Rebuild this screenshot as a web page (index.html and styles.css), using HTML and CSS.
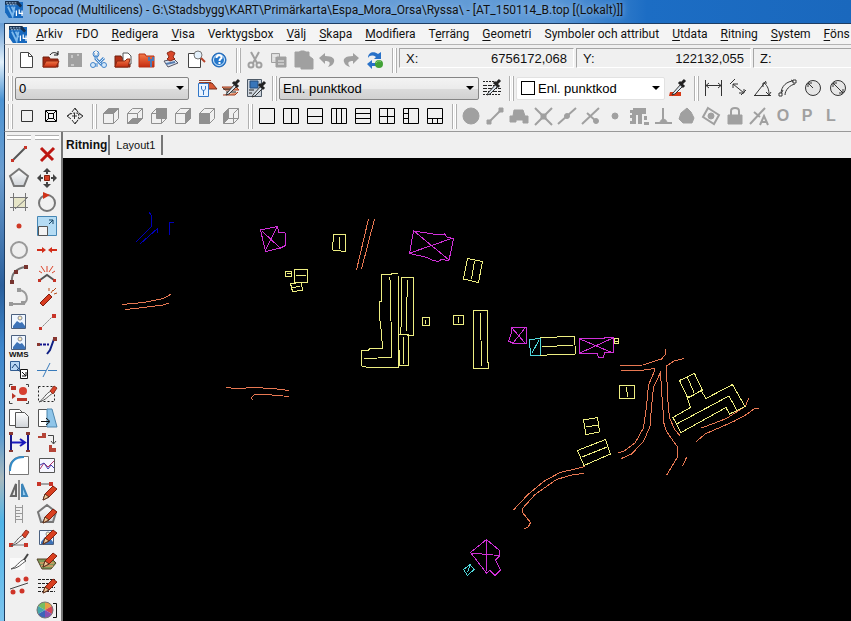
FILE: index.html
```html
<!DOCTYPE html>
<html lang="sv">
<head>
<meta charset="utf-8">
<title>Topocad</title>
<link rel="stylesheet" href="styles.css">
</head>
<body>
<svg class="defs" aria-hidden="true">
  <defs>
    <linearGradient id="steel" x2="0" y2="1"><stop stop-color="#fff"/><stop offset="1" stop-color="#cfd3d8"/></linearGradient>
    <linearGradient id="ember" x2="0" y2="1"><stop stop-color="#f47a48"/><stop offset="1" stop-color="#c52c10"/></linearGradient>
    <symbol id="logo" viewBox="0 0 20 18"><path d="M0 1h19v17H4L0 12z" fill="#1768bd"/><path d="M0 0h14l4 5-2 2-3-3H0z" fill="#17304f"/><path d="M1 2h11M2 4h10" stroke="#b9d7f4" stroke-dasharray="2 1"/><path d="M3 6l5 10 2-10M7 6l3 6" stroke="#7db9ed" stroke-width="2"/><path d="M12 10v6M15 9v4h4M18 10v6" stroke="#fff" stroke-width="1.3"/></symbol>
    <symbol id="pencil" viewBox="0 0 24 24"><path d="M8 19l2-6 8-8 4 3-8 8z" fill="#d94020" stroke="#85200d"/><path d="M8 19l2-6 4 3z" fill="#f4c998" stroke="#553322"/></symbol>
    <symbol id="dropper" viewBox="0 0 24 24"><path d="M8 17l8-9 2 2-8 8-3 1z" fill="#dbe5ee" stroke="#333"/><path d="M14 6l5 5M16 8l4-4" stroke="#222" stroke-width="3"/></symbol>
    <symbol id="knife" viewBox="0 0 24 24"><path d="M4 20c5-3 6-8 12-11l2 2c-5 3-7 7-14 9z" fill="#f8f8f8" stroke="#555"/><path d="M15 9l4-5 3 2-4 6z" fill="#d9442a" stroke="#913020"/></symbol>
    <symbol id="image" viewBox="0 0 24 24"><path d="M4.500 4.500h14v14h-14z" fill="#eef6ff" stroke="#4b607f"/><path d="M6 16l4-5 3 2 2-1 3 4v2H6z" fill="#3d73b8"/><circle cx="13" cy="8" r="2" fill="#fff3bd" stroke="#889"/></symbol>
  </defs>
</svg>
<div class="window">
  <header class="titlebar"><svg class="logo"><use href="#logo"/></svg><h1>Topocad (Multilicens) - G:\Stadsbygg\KART\Primärkarta\Espa_Mora_Orsa\Ryssa\ - [AT_150114_B.top [(Lokalt)]]</h1></header>
  <nav class="menu" aria-label="Meny">
    <svg class="logo"><use href="#logo"/></svg>
    <button><u>A</u>rkiv</button><button>FDO</button><button><u>R</u>edigera</button><button><u>V</u>isa</button><button>Verktygs<u>b</u>ox</button><button><u>V</u>älj</button><button><u>S</u>kapa</button><button><u>M</u>odifiera</button><button>T<u>e</u>rräng</button><button><u>G</u>eometri</button><button>Symboler och attribut</button><button><u>U</u>tdata</button><button><u>R</u>itning</button><button><u>S</u>ystem</button><button><u>F</u>öns</button>
  </nav>
  <div class="toolbars">
    <div class="row">
      <div class="bar">
        <button aria-label="Ny"><svg><path d="M5.500 4.500h8l4 4v11h-12z" fill="#fff" stroke="#444"/><path d="M13.500 4.500v4h4" stroke="#444"/></svg></button>
        <button aria-label="Öppna"><svg><path d="M4 9h6l1 2h8v8H4z" fill="#a92a12" stroke="#70200e"/><path d="M4 19l3-6h13l-3 6z" fill="url(#ember)" stroke="#8d2711"/><path d="M11 7c2-3 5-3 8-1M19 3v4h-4" stroke="#111"/></svg></button>
        <button class="off" aria-label="Spara"><svg class="fill"><path d="M5 5h14v14H5z" class="solid"/><path d="M9 7v3M15 6v2M8 17h3" stroke="#eee"/></svg></button>
        <button aria-label="Inställningar"><svg><path d="M9 5v6l6 6M6 17h5M17 10l-4 4" stroke="#4385cb" stroke-width="3"/><path d="M9 5v6l6 6M6 17h5M17 10l-4 4" stroke="#d5e9fa"/><circle cx="9" cy="6" r="3" stroke="#4385cb"/><circle cx="6" cy="17" r="2.500" fill="#d5e9fa" stroke="#4385cb"/><circle cx="17" cy="17" r="2.500" fill="#d5e9fa" stroke="#4385cb"/><path d="M9 3v4" stroke="#f0f0f0" stroke-width="2"/></svg></button>
        <button aria-label="Öppna ritning"><svg><path d="M4 8h6l1 2h8v9H4z" fill="#b33016" stroke="#70200e"/><path d="M12 5h5l3 3v8h-8z" fill="#fff" stroke="#555"/><path d="M4 19l2-6h8l2-2h3l-2 8z" fill="url(#ember)" stroke="#8d2711"/></svg></button>
        <button aria-label="Projekt"><svg><path d="M4 6h6l1 2h8v11H4z" fill="url(#ember)" stroke="#b62e12"/><path d="M16 11v8M14 9v3h4V9" stroke="#4c78b5" stroke-width="2"/></svg></button>
        <button aria-label="Stämpel"><svg><path d="M5 13l10-2 4 4-10 4z" fill="#dce5f1" stroke="#556"/><path d="M7 16l9-2" stroke="#567bad" stroke-width="2"/><path d="M8 11l2-2-2-4 4-2 4 2-2 4 2 2-5 2z" fill="#d9472a" stroke="#8a2a16"/></svg></button>
        <button aria-label="Förhandsgranska"><svg><path d="M5.500 5.500h8l4 4v10h-12z" fill="#fff" stroke="#444"/><circle cx="15" cy="7" r="4" fill="#e4f1fc" stroke="#777"/><path d="M18 10l4 4" stroke="#b8432a" stroke-width="2"/></svg></button>
        <button aria-label="Hjälp"><svg><circle cx="12" cy="12" r="7" fill="#2678cb" stroke="#1b64b5"/><circle cx="12" cy="12" r="5.500" stroke="#d9edff"/><path d="M9.500 10c0-4 6-3 5 0-1 1-2 1-2 3M12.500 14v2" stroke="#fff" stroke-width="2"/></svg></button>
      </div>
      <div class="bar off">
        <button aria-label="Klipp ut"><svg><path d="M8 4l6 11M16 4l-6 11" stroke-width="2"/><circle cx="8" cy="17" r="2.500" stroke-width="2"/><circle cx="16" cy="17" r="2.500" stroke-width="2"/></svg></button>
        <button aria-label="Kopiera"><svg><path d="M4.500 5.500h8v9h-8z" fill="#ddd"/><path d="M9 9h10v10H9z" class="solid"/><path d="M6 8h4M6 11h2M11 13h6M11 16h6" stroke="#eee"/></svg></button>
        <button aria-label="Klistra in"><svg><path d="M4 4h4l2-1h3l2 1h3v4l4 3v10H10v-2H4z" class="solid"/></svg></button>
        <button aria-label="Ångra"><svg class="fill"><path d="M4 10l6-5v3c8 0 10 3 9 6-1 3-3 4-6 5 3-4 2-6-3-6v3z" class="solid"/></svg></button>
        <button aria-label="Gör om"><svg class="fill"><path d="M20 10l-6-5v3c-8 0-10 3-9 6 1 3 3 4 6 5-3-4-2-6 3-6v3z" class="solid"/></svg></button>
        <button aria-label="Uppdatera"><svg class="fill"><path d="M5 10c0-6 6-7 10-4l3-2v7h-7l2-2c-3-2-6-2-8 1z" fill="#2871c8"/><path d="M4 16l5-4v3h5v3H9v3z" fill="#2871c8"/><circle cx="16" cy="16" r="4" fill="#42a237"/><path d="M13 15c2-3 4-2 5-1" stroke="#8bd078"/></svg></button>
      </div>
      <div class="bar grow">
        <dl class="coords"><div><dt>X:</dt><dd>6756172,068</dd></div><div><dt>Y:</dt><dd>122132,055</dd></div><div><dt>Z:</dt><dd></dd></div></dl>
      </div>
    </div>
    <div class="row">
      <div class="bar">
        <span class="combo layer"><select aria-label="Lager"><option>0</option></select></span>
        <button aria-label="Lagerhanterare"><svg><path d="M4 4.500h12M4 6.500h12" stroke="#9a4329"/><path d="M10 7h7l5 6H12z" fill="#d95732" stroke="#7a2e18"/><path d="M3.500 7.500h10v13h-10z" fill="#e9f3ff" stroke="#3277c8"/><path d="M6.500 10v3l2 2 2-2v-3M8.500 14v5" stroke="#3277c8"/></svg></button>
        <button aria-label="Välj lager"><svg><path d="M3 11h14l3 3H6zM4 19h12l3-3" fill="#e89975" stroke="#9f3a1e"/><path d="M4 13h8M7 16h10" stroke="#222"/><use href="#dropper"/></svg></button>
        <button aria-label="Hämta egenskaper"><svg><path d="M4.500 3.500h14v17h-14z" fill="#ccd3db" stroke="#4d5966"/><path d="M7 5h8v7H7z" fill="#3976ba" stroke="#234b7b"/><path d="M6 14h5M6 17h3" stroke="#222"/><use href="#dropper" x="2" y="2"/></svg></button>
      </div>
      <div class="bar">
        <span class="combo code"><select aria-label="Punktkod"><option>Enl. punktkod</option></select></span>
        <button aria-label="Hämta linjetyp"><svg><path d="M3 5.500h12M3 18.500h18" stroke="#222" stroke-dasharray="2 1"/><path d="M3 9.500h12M3 12.500h18M3 15.500h18" stroke="#222" stroke-dasharray="4 1"/><use href="#dropper"/></svg></button>
      </div>
      <div class="bar">
        <span class="combo color"><i></i><select aria-label="Färg"><option>Enl. punktkod</option></select></span>
        <button aria-label="Hämta färg"><svg><path d="M5 16h11v4H4z" fill="#d63a18"/><use href="#dropper"/></svg></button>
      </div>
      <div class="bar wide dark">
        <button aria-label="Horisontellt mått"><svg><path d="M4.500 4v16M20.500 4v16M5 9.500h15M8 7l-3 2.500 3 2.500M17 7l3 2.500-3 2.500"/></svg></button>
        <button aria-label="Parallellt mått"><svg><path d="M7 8l11 9M7 12V8h5M18 13v4h-5M4 8l5-5M15 19l5-5"/></svg></button>
        <button aria-label="Vinkelmått"><svg><path d="M3 19.500h17M4 19L15 5M13 7c4 3 5 7 5 12M12 11V7h4M15 16l3 3 2-3"/></svg></button>
        <button aria-label="Bågmått"><svg><path d="M5 18C5 10 11 5 18 5M9 19c0-5 5-10 10-11M7 14l-2 4M15 4l4 2"/><path d="M3 17h3v3H3zM17 4h3v3h-3z" fill="#fff"/></svg></button>
        <button aria-label="Radiemått"><svg><circle cx="12" cy="12" r="7.500" fill="#e6e6e6"/><path d="M12 12L7 7M7 11V7h4"/></svg></button>
        <button aria-label="Diametermått"><svg><circle cx="12" cy="12" r="7.500" fill="#e6e6e6"/><path d="M7 7l10 10M7 11V7h4M13 17h4v-4"/></svg></button>
      </div>
    </div>
    <div class="row">
      <div class="bar dark">
        <button aria-label="Ram"><svg><path d="M6.500 6.500h11v11h-11z"/></svg></button>
        <button aria-label="Vy uppifrån"><svg><path d="M6.500 6.500h11v11h-11zM9.500 9.500h5v5h-5zM7 7l3 3M17 7l-3 3M7 17l3-3M17 17l-3-3" stroke="#000"/></svg></button>
        <button aria-label="Rotera vy"><svg><path d="M9 8l3-4 3 4M8 9l-4 3 4 3M16 9l4 3-4 3M9 16l3 4 3-4M11.500 9v6M9 12h5"/><path d="M12 5c5 3 5 11 0 14M5 12c3-4 11-4 14 0" stroke-dasharray="2 1"/></svg></button>
      </div>
      <div class="bar cube">
        <button aria-label="Topp"><svg><path d="M4.500 9.500l5-5h10l-5 5z" class="solid"/><path d="M4.500 9.500h10v10h-10zM19.500 4.500v10l-5 5M14.500 9.500l5-5"/></svg></button>
        <button aria-label="Botten"><svg><path d="M4.500 19.500l5-5h10l-5 5z" class="solid"/><path d="M4.500 9.500h10v10h-10zl5-5h10v10l-5 5M14.500 9.500l5-5"/></svg></button>
        <button aria-label="Bak"><svg><path d="M9.500 4.500h10v10h-10z" class="solid"/><path d="M4.500 9.500h10v10h-10zl5-5h10v10l-5 5M14.500 9.500l5-5"/></svg></button>
        <button aria-label="Höger"><svg><path d="M14.500 9.500l5-5v10l-5 5z" class="solid"/><path d="M4.500 9.500h10v10h-10zl5-5h10v10l-5 5M14.500 9.500l5-5"/></svg></button>
        <button aria-label="Fram"><svg><path d="M4.500 9.500h10v10h-10z" class="solid"/><path d="M4.500 9.500h10v10h-10zl5-5h10v10l-5 5M14.500 9.500l5-5"/></svg></button>
        <button aria-label="Vänster"><svg><path d="M4.500 9.500l5-5v10l-5 5z" class="solid"/><path d="M9.500 4.500h10v10h-10M4.500 19.500h10v-10M14.500 19.500l5-5M14.500 9.500l5-5"/></svg></button>
      </div>
      <div class="bar black">
        <button aria-label="Ett fönster"><svg><path d="M4.500 4.500h15v15h-15z"/></svg></button>
        <button aria-label="Två kolumner"><svg><path d="M4.500 4.500h15v15h-15zM12.500 4v15"/></svg></button>
        <button aria-label="Två rader"><svg><path d="M4.500 4.500h15v15h-15zM4 12.500h15"/></svg></button>
        <button aria-label="Tre kolumner"><svg><path d="M4.500 4.500h15v15h-15zM9.500 4v15M14.500 4v15"/></svg></button>
        <button aria-label="Tre rader"><svg><path d="M4.500 4.500h15v15h-15zM4 9.500h15M4 14.500h15"/></svg></button>
        <button aria-label="Fyra fönster"><svg><path d="M4.500 4.500h15v15h-15zM4 12.500h15M12.500 4v15"/></svg></button>
        <button aria-label="Tre till vänster"><svg><path d="M4.500 4.500h15v15h-15zM9.500 4v15M4 9.500h5M4 14.500h5"/></svg></button>
        <button aria-label="Tre nedtill"><svg><path d="M4.500 4.500h15v15h-15zM4 14.500h15M9.500 14v5M14.500 14v5"/></svg></button>
      </div>
      <div class="bar off snap">
        <button aria-label="Snappa"><svg><circle cx="12" cy="12" r="8" class="solid"/></svg></button>
        <button aria-label="Slutpunkt"><svg><path d="M5 19L18 6" stroke-width="2"/><path d="M4 16h4v4H4zM16 4h4v4h-4z" class="solid"/></svg></button>
        <button aria-label="Närmast"><svg><path d="M7 6h9l2 6h3v7h-5v-3H9v2H3v-6h3z" class="solid"/></svg></button>
        <button aria-label="Skärning"><svg><path d="M4 4l17 17M21 4L4 21" stroke-width="2"/><path d="M10 10h5v5h-5z" class="solid"/></svg></button>
        <button aria-label="Mittpunkt"><svg><path d="M3 20L21 4" stroke-width="2"/><circle cx="12" cy="12" r="2.500" class="solid"/></svg></button>
        <button aria-label="Tangent"><svg><path d="M3 20L20 4M8 9l10 9" stroke-width="2"/><circle cx="17" cy="17" r="2.500" class="solid"/></svg></button>
        <button aria-label="Punkt"><svg><circle cx="12" cy="12" r="3" class="solid"/></svg></button>
        <button aria-label="Objekt"><svg class="fill"><path d="M3 6h3V4h13v6h-4v10h-4v-9H9v9H3v-3h2v-3H3v-3h2V9H3z" class="solid"/><path d="M17 12h3v4h-3zM17 18h5v3h-5z" class="solid"/></svg></button>
        <button aria-label="Vinkelrätt"><svg><path d="M12 4v14M4 19h17" stroke-width="2"/><path d="M9 19c0-5 7-5 7 0z" class="solid"/></svg></button>
        <button aria-label="Kvadrant"><svg><path d="M12 4l4 4 3 6-2 5H8l-4-4 2-6z" class="solid"/></svg></button>
        <button aria-label="Centrum"><svg><path d="M9 4l11 7-5 9-11-7z" stroke-width="2"/><circle cx="12" cy="12" r="3" class="solid"/></svg></button>
        <button aria-label="Lås"><svg><path d="M5 11h14v9H5z" class="solid"/><path d="M8 11V7c0-4 8-4 8 0v4" stroke-width="2"/></svg></button>
        <button aria-label="Automatisk"><svg><path d="M3 20L18 4M7 8l6 5M13 21l4-9 4 9M14 18h6" stroke-width="2"/></svg></button>
        <button>O</button><button>P</button><button>L</button>
      </div>
    </div>
  </div>
  <main>
    <aside class="palette" aria-label="Ritverktyg">
      <div class="grip"></div><div class="grip"></div>
      <button aria-label="Linje"><svg><path d="M6 18L18 6" stroke="#555" stroke-width="2"/><path d="M4 17h3v3H4zM17 4h3v3h-3z" fill="#c83428"/></svg></button>
      <button aria-label="Radera"><svg><path d="M6 6l12 12M19 6L6 19" stroke="#bd1712" stroke-width="3"/></svg></button>
      <button aria-label="Polygon"><svg><path d="M12 3l9 7-4 10H7L3 10z" fill="url(#steel)" stroke="#777" stroke-width="2"/></svg></button>
      <button aria-label="Flytta"><svg><path d="M12 4v16M4 12h16" stroke="#444" stroke-width="2"/><path d="M12 2l4 4H8zM12 22l4-4H8zM2 12l4-4v8zM22 12l-4-4v8z" fill="#444"/><path d="M8 8h8v8H8z" fill="#f0f0f0"/><path d="M9.500 9.500h5v5h-5z" fill="#d54027" stroke="#85200d"/></svg></button>
      <button aria-label="Beskär"><svg><path d="M6 7h12v11H6z" fill="#e6e5c7"/><path d="M3 7.500h18M3 17.500h18M6.500 3v18M18.500 3v18M8 19L20 8" stroke="#777"/></svg></button>
      <button aria-label="Rotera"><svg><circle cx="12" cy="13" r="8" stroke="#777" stroke-width="2"/><path d="M8 2l7 3-7 4z" fill="#cf3219"/></svg></button>
      <button aria-label="Punkt"><svg><circle cx="12" cy="12" r="2.500" fill="#cf3926"/></svg></button>
      <button aria-label="Skala"><svg><path d="M2.500 2.500h19v19h-19z" fill="#b5dcf4" stroke="#4586b4"/><path d="M3.500 12.500h9v9h-9z" fill="#f3f3f3" stroke="#555"/><path d="M14 10l4-4M14 6h4v4" stroke="#174565"/></svg></button>
      <button aria-label="Cirkel"><svg><circle cx="12" cy="12" r="8" fill="#eee" stroke="#999" stroke-width="2"/></svg></button>
      <button aria-label="Sammanfoga"><svg><path d="M2 12h6M16 12h6" stroke="#d22d1a" stroke-width="2"/><path d="M7 9l4 3-4 3zM17 9l-4 3 4 3z" fill="#d22d1a"/></svg></button>
      <button aria-label="Båge"><svg><path d="M5 20C4 12 9 6 19 5" stroke="#777" stroke-width="2"/><path d="M3 18h4v4H3zM7 8h4v4H7zM17 3h4v4h-4z" fill="#76342f"/></svg></button>
      <button aria-label="Explodera"><svg><path d="M5 18l7-5 7 5" stroke="#555" stroke-width="2"/><path d="M12 10V4M10 10L6 4M14 10l4-6M7 11L4 9M17 11l3-2" stroke="#dc4228"/><path d="M3 17h3v3H3zM18 17h3v3h-3z" fill="#c53225"/></svg></button>
      <button aria-label="Spline"><svg><path d="M12 4c9 1 10 11 4 14H4" stroke="#999" stroke-width="2"/><path d="M10 2h4v4h-4zM2 16h4v4H2zM14 15h4v4h-4z" fill="#999"/></svg></button>
      <button aria-label="Spräng"><svg><path d="M5 17L14 8l3 3-9 9z" fill="#d83c20" stroke="#7e1e0f"/><path d="M16 7l2-3M19 8l3-1M18 5l3-3M14 5V2" stroke="#b84c1a"/></svg></button>
      <button aria-label="Bild"><svg><use href="#image"/></svg></button>
      <button aria-label="Förläng"><svg><path d="M6 18L18 6" stroke="#777" stroke-dasharray="2 1"/><path d="M4 17h3v3H4zM17 4h4v4h-4z" fill="#c83428"/></svg></button>
      <button aria-label="WMS"><svg><use href="#image" y="-3"/><text x="2" y="23">WMS</text></svg></button>
      <button aria-label="Trimma"><svg><path d="M4 10.500h10" stroke="#14148d" stroke-width="2" stroke-dasharray="3 1"/><path d="M12 20l3-4 4-11" stroke="#102084" stroke-width="2"/><path d="M2 9h3v3H2zM18 3h4v4h-4z" fill="#883630"/></svg></button>
      <button aria-label="Bildreferens"><svg><path d="M3.500 3.500h9v9h-9z" fill="#b9d7f4" stroke="#315c91"/><path d="M5 10l3-4 4 5M10 11l5 4" stroke="#183f73"/><path d="M13.500 11.500h7v9h-7z" fill="#fff" stroke="#111"/><path d="M15 14l4 4M19 14v4h-4" stroke="#111"/></svg></button>
      <button aria-label="Bryt"><svg><path d="M2 12.500h20" stroke="#397bbb" stroke-dasharray="9 2"/><path d="M8 19l7-14" stroke="#397bbb"/></svg></button>
      <button aria-label="Symboler"><svg><path d="M4 4h5v4H4zM5 11l4 3-4 3zM10 16h10v3H10z" fill="#b93427"/><circle cx="16" cy="9" r="4" fill="#d74030"/><path d="M2.500 5V2.500h3M19 2.500h2.500V5M2.500 19v2.500h3M19 21.500h2.500V19" stroke="#444"/></svg></button>
      <button aria-label="Klipp yta"><svg><path d="M3.500 4.500h16v15h-16z" stroke="#222" stroke-dasharray="2 2"/><use href="#knife"/></svg></button>
      <button aria-label="Kopiera objekt"><svg><path d="M2.500 3.500h10l3 3v13h-13z" fill="#fff" stroke="#555"/><path d="M8.500 6.500h9l4 4v11h-13z" fill="url(#steel)" stroke="#555"/></svg></button>
      <button aria-label="Sträck"><svg><path d="M3.500 3.500h12v17h-12z" fill="#fff" stroke="#555"/><path d="M12 3h5l5 18H12z" fill="#8fc5e9" stroke="#4d86ae"/><path d="M6 15.500h8M11 12l4 3.500-4 3.500" stroke="#111"/></svg></button>
      <button aria-label="Avstånd"><svg><path d="M4 4v17M21 4v17" stroke="#16168c" stroke-width="2"/><path d="M5 12.500h12M13 9l5 3.500-5 3.500" stroke="#1818bd" stroke-width="2"/><path d="M2 2h4v3H2zM19 2h4v3h-4zM2 20h4v2H2zM19 20h4v2h-4z" fill="#883630"/></svg></button>
      <button aria-label="Ordna"><svg><path d="M3 6h4V3h4v5H3zM14 15h3v3h4v4h-7z" fill="#b44437"/><path d="M13 5.500h5.500v8M16 11l2.500 3 2.500-3" stroke="#444"/></svg></button>
      <button aria-label="Avrunda"><svg><path d="M2.500 21V13C3 7 8 3 14 2.500h7.500v18h-19" fill="#fff" stroke="#777"/><path d="M3 17C3 8 8 3 17 3" stroke="#338bc7" stroke-width="2"/></svg></button>
      <button aria-label="Profil"><svg><path d="M4.500 4.500h15v14h-15z" fill="#f6f6ff" stroke="#555"/><path d="M5 15l4-6 4 4 6-6" stroke="#b03068"/><path d="M5 11l4-2 4 6 3-4 3 3" stroke="#403aac"/></svg></button>
      <button aria-label="Spegla"><svg><path d="M9 6v12H4z" fill="#e4e4e4" stroke="#666" stroke-width="2"/><path d="M15 6v12h5z" fill="#9acdf0" stroke="#3d86ba" stroke-width="2"/><path d="M12 2v20" stroke="#222"/></svg></button>
      <button aria-label="Redigera linje"><svg><path d="M3 6h13" stroke="#555"/><path d="M2 4h4v4H2zM14 4h4v4h-4z" fill="#c83428"/><use href="#pencil" y="3"/></svg></button>
      <button aria-label="Linjal"><svg><path d="M8.500 3v18M15.500 3v18M9 5.500h6M9 8.500h4M9 11.500h6M9 14.500h4M9 17.500h6" stroke="#999"/></svg></button>
      <button aria-label="Redigera polygon"><svg><path d="M12 3l9 7-3 10H6L3 10z" fill="url(#steel)" stroke="#777" stroke-width="2"/><use href="#pencil" y="2"/></svg></button>
      <button aria-label="Dela linje"><svg><path d="M4 19h15" stroke="#777"/><path d="M2 17h4v4H2zM17 17h4v4h-4z" fill="#c83428"/><use href="#knife"/></svg></button>
      <button aria-label="Redigera bild"><svg><use href="#image"/><use href="#pencil" y="-1"/></svg></button>
      <button aria-label="Skalpell"><svg><path d="M3 8h15v12H3z" fill="#fafafa"/><path d="M4 19c6-2 7-7 13-10l2 2c-5 3-7 7-15 8z" fill="#fff" stroke="#555"/><path d="M17 10l4-6" stroke="#444" stroke-width="2"/></svg></button>
      <button aria-label="Redigera yta"><svg><path d="M2 9h15l4 4-5 6H7z" fill="#7a9a5a" stroke="#574229"/><path d="M5 13h14M6 16h12" stroke="#c19a60" stroke-width="2"/><use href="#pencil" y="-2"/></svg></button>
      <button aria-label="Fördela punkter"><svg><path d="M3 15l18-6" stroke="#444"/><circle cx="11" cy="6" r="2.500" fill="#cf3428"/><circle cx="19" cy="5" r="2.500" fill="#cf3428"/><circle cx="6" cy="18" r="2.500" fill="#cf3428"/><circle cx="15" cy="17" r="2.500" fill="#cf3428"/></svg></button>
      <button aria-label="Redigera linjetyp"><svg><path d="M3 5.500h17M3 9.500h17M3 13.500h17M3 17.500h17" stroke="#222" stroke-dasharray="3 1"/><use href="#pencil"/></svg></button>
      <span></span>
      <button aria-label="Färger"><svg><path d="M10 12L3 8a8 8 0 0 1 7-4z" fill="#78bd60"/><path d="M10 12V4a8 8 0 0 1 7 4z" fill="#e8a043"/><path d="M10 12l7-4a8 8 0 0 1 0 8z" fill="#d24657"/><path d="M10 12l7 4a8 8 0 0 1-7 4z" fill="#8950b0"/><path d="M10 12v8a8 8 0 0 1-7-4z" fill="#3d65b8"/><path d="M10 12l-7 4a8 8 0 0 1 0-8z" fill="#45a7aa"/><circle cx="10" cy="12" r="8" stroke="#777"/><path d="M18 5.500h3.500v14H18" stroke="#111"/></svg></button>
    </aside>
    <section class="work">
      <div class="tabs" role="tablist"><button role="tab" aria-selected="true">Ritning</button><button role="tab" aria-selected="false">Layout1</button></div>
      <svg class="drawing" role="img" aria-label="Karta">
        <g transform="translate(-63 -158)">
          <path class="blue" d="M149 212l2 3v12l-15 15M158 228l-18 16M157 228v5M169.500 235v-12l4-1"/>
          <path class="road" d="M368.500 219l-12 51M374.500 219l-13 50M122 304.500l21.500-2 18-3.500 6-2.500 3.500-2.500M125 309.500l18.500-2 20-2.500 5.500-2M226 387.500l10.500 1 20-1 20 1.500 12.500 1.500M289 396.500l-22.500-2h-12l-3 3 1 3"/>
          <path class="road" d="M620.500 365.500l22.500-.5 18.500-6 3.500-4 .5-6M620.500 370.500h20l14-2v2.500l-6 14-2 22-3 21-8.500 15-11.500 8.500-5.500 1M621.500 458.500l10-4.500 12-12.500 6.500-15 1.500-19.500 2-20 7-14.500 1.500 24 2 27 2.500 8 11 15.500v10l-11 18.500M684 358.500l-10 2.500-7.500 5 1 30.500 2 21.500 5.500 12 5 5.500M686.500 457.500l-4 9M701.500 428l25-9.500 19-12.500 3-7.500M696.500 441.500l8.500-7.500 28.500-12.500 13-7 8-6h4.500"/>
          <path class="road" d="M513.500 510l14-15 16-13.500 16.500-9 25.500-6M584.500 473.500l-11 1-17 5-21.500 15-12.500 14v4l8 10-2 4-4 2.500"/>
          <path class="public" d="M260.500 230l17-3.500 1 5.500 6.500.5.500 13-5 2.500-15 3.500zM262 231l18 17M277 227l-12 24M413.500 231l26 4 5-1 3 3.500 6 1-4.500 22-8-1-2.500 2-6-1-5-3-18-4zM414 231l35 29M410 253l43-15M511.500 327.500h15l-.5 16h-12.500l-5-2.500 3-8zM512 328l13 15M525 328l-12 15M579.500 338.500h24.500l1-1h8.500v15h-9l-1 5h-5l-1.500-4h-17.500zM580 339l33 14M613 338l-33 15M486.500 539.500l13 11v5.500l-4 4 5 10-5.500 5.500-5-5-3.500 2.500-16-20.500zM471 553l28 2.500M486.500 540v31"/>
          <path class="house" d="M333.500 234.500l12.500.5-.5 16.500-13-1.500zM339.500 237v12M467.500 258.500l15 3-4 21-15-3.500zM474.500 261.500l-3 18M285.500 271.500h6v5h-6zM287 273.500h4M294.500 269.500h13v13h-13zM296 275.500h10M290.500 283.500l11-1 1 8-10 1zM292 287.500l8-1"/>
          <path class="house" d="M381.500 274.500h10l.5-1h6l.5 94h-30l-7-1.500v-15.500h7l1-2h13l-1-15.500-2-16v-16h2zM389.500 277l1 6 1 74.500-27.500 1M401.500 277.500h12v58l-13-1 1-14.500zM407.500 280l-1.500 52M398.500 334.500h10v31h-9zM403.500 337v27M422.500 317.500h7v8h-7zM425.500 320v4M453.500 315.500h10v9h-10zM458.500 317v6M473.500 310.500h14v51.500h1v6.500h-15zM480.500 313l1 53"/>
          <path class="house" d="M540.500 337.500l34-1 1 17.500-28 .5-1 1h-6zM542 346.500l31-1M614.500 338.500h4v5h-4zM615 341h3M619.500 385.500h15v13h-15zM626.500 387l1 10M583.500 420l14-2.500 2 14.500-13.500 2.500zM586 427l12-2M577.500 450.500l28-11 5 14.500-26.500 11.500zM582 457l25-10M679.500 380.500l15-7 8 17-15 7zM687.500 377.500l6.500 15M673 417.500l17.500-10-3-9 13.500-8 5 8 26.500-14 12.500 22-15.500 7.500-3.500-6.500-45 25zM677.500 423.500L729 396l8 14.500"/>
          <path class="cyan" d="M529.500 339.500l11-1-.5 17h-9.500zM539 340l-7 13M463.500 569.500l6.500-5 4 5-6.500 6zM470 566l-2.500 6"/>
        </g>
      </svg>
    </section>
  </main>
</div>
</body>
</html>
```
FILE: styles.css
```css
*, ::before, ::after { box-sizing: border-box; }
body {
  margin: 0;
  height: 100vh;
  overflow: hidden;
  font: 12px "Liberation Sans", Arial, sans-serif;
  color: #111;
  background: linear-gradient(#6b9fd6 4%, #e2f1fb 10%, #4c94d4 16%, #6b9dcf 28%, #2a5f9c 46%, #3c86cc 56%, #5a9bd0 70%, #a9b9bd 77%, #4fb4e8 84%, #7cc4ee);
}
button {
  font: inherit;
  color: inherit;
  background: none;
  border: 0;
  padding: 0;
}
svg { fill: none; stroke: none; }
.defs { position: absolute; width: 0; height: 0; }

.window { height: 100%; display: flex; flex-direction: column; }
.titlebar {
  flex: none;
  height: 23px;
  display: flex;
  align-items: center;
  gap: 3px;
  padding: 0 0 4px 5px;
  overflow: hidden;
  background: linear-gradient(90deg, #80b0e0 0, #6b9fd6 35%, #5c98d6 65%, #1c6dc4 76%, #1a68bd);
}
.titlebar h1 {
  margin: 0;
  font: 12px Roboto, sans-serif;
  white-space: nowrap;
  text-shadow: 0 0 6px #b9d5ef;
}
.logo { flex: none; width: 19px; height: 17px; }

.menu, .toolbars, main { margin-left: 4px; border-left: 1px solid #1e3d62; }
.menu {
  flex: none;
  height: 21px;
  display: flex;
  align-items: center;
  gap: 13px;
  padding-left: 4px;
  overflow: hidden;
  white-space: nowrap;
  font: 12px Roboto, sans-serif;
  background: #f4f4f4;
  border-top: 1px solid #1e3d62;
}
.menu .logo { margin-right: -5px; }
.menu u { text-underline-offset: 2px; }

.toolbars {
  flex: none;
  padding: 1px 0 1px 3px;
  overflow: hidden;
  background: #f0f0f0;
  border-top: 1px solid #b4b4b4;
  border-bottom: 1px solid #999;
}
.row { display: flex; gap: 5px; height: 28px; }
.bar { display: flex; flex: none; align-items: center; color: #333; }
.bar::before {
  content: "";
  width: 5px;
  height: 25px;
  margin-right: 2px;
  border: solid #b0b0b0;
  border-width: 0 1px;
  background: linear-gradient(90deg, #fff 1px, #f0f0f0 1px, #f0f0f0 2px, #fff 2px);
}
.bar button { width: 24px; height: 24px; flex: none; }
.bar svg, .palette svg { display: block; width: 24px; height: 24px; }
.bar.wide button { width: 25px; }
.bar.grow { flex: 1; }
.bar.off, .bar .off { color: #a0a0a0; }
.off svg, .cube svg, .dark svg, .black svg { stroke: currentColor; }
.off svg.fill { stroke: none; }
.off svg .solid, .cube .solid { fill: currentColor; }
.bar.cube { color: #909090; }
.bar.black { color: #000; }
.snap button { font-size: 16px; font-weight: bold; }

.coords {
  flex: 1;
  display: flex;
  gap: 2px;
  height: 20px;
  margin: 0 0 4px;
  font-size: 13px;
  color: #111;
}
.coords div {
  flex: none;
  width: 175px;
  display: flex;
  justify-content: space-between;
  align-items: center;
  padding: 0 6px;
  border: 1px solid #a5a5a5;
  border-right-color: #fff;
  border-bottom-color: #fff;
}
.coords dd { margin: 0; }

.combo {
  position: relative;
  display: flex;
  align-items: center;
  height: 23px;
  border: 1px solid #858585;
  border-radius: 2px;
  background: linear-gradient(#f3f3f3, #ebebeb 50%, #dcdcdc 50%, #d1d1d1);
}
.combo::after {
  content: "";
  position: absolute;
  right: 4px;
  width: 8px;
  height: 4px;
  background: #000;
  clip-path: polygon(0 0, 100% 0, 50% 100%);
}
.combo select {
  appearance: none;
  flex: 1;
  height: 100%;
  border: 0;
  padding: 0 3px;
  background: none;
  font: 13px "Liberation Sans", Arial, sans-serif;
  color: #000;
}
.layer { width: 174px; margin-right: 6px; }
.code { width: 200px; margin-right: 1px; }
.color { width: 149px; background: #fff; border-color: #e2e2e2; }
.color i { width: 14px; height: 14px; margin-left: 4px; border: 1px solid #000; }

main { flex: 1; min-height: 0; display: flex; background: #f0f0f0; }
.palette {
  flex: none;
  display: grid;
  grid-template-columns: 28px 28px;
  grid-template-rows: 10px;
  grid-auto-rows: 24px;
  justify-items: center;
  overflow: hidden;
}
.grip {
  width: 24px;
  height: 5px;
  margin-top: 3px;
  border: solid #b0b0b0;
  border-width: 1px 0;
  background: #fff;
}
.palette text { font: bold 8px "Liberation Sans", sans-serif; fill: #111; }
.work {
  flex: 1;
  min-width: 0;
  display: flex;
  flex-direction: column;
  border-left: 2px solid #777;
}
.tabs { flex: none; display: flex; height: 26px; padding: 3px 0; }
.tabs button { padding: 0 6px; border-right: 2px solid #777; font-size: 11px; }
.tabs button[aria-selected="true"] { padding: 0 1px 0 3px; font-size: 12px; font-weight: bold; }
.drawing {
  flex: 1;
  width: 100%;
  min-height: 0;
  background: #000;
  shape-rendering: crispEdges;
}
.blue { stroke: #0000b8; }
.road { stroke: #e87852; }
.public { stroke: #d030d8; }
.house { stroke: #eeee82; }
.cyan { stroke: #50d8dc; }
```
